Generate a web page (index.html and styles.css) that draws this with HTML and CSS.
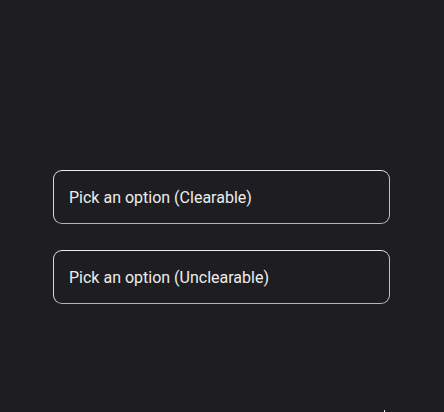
FILE: index.html
```html
<!DOCTYPE html>
<html>
<head>
<meta charset="utf-8">
<link rel="stylesheet" href="styles.css">
</head>
<body>
<div class="page">
  <div class="stack">
    <div class="select"><span class="label">Pick an option (Clearable)</span></div>
    <div class="select"><span class="label">Pick an option (Unclearable)</span></div>
  </div>
  <span class="tick"></span>
</div>
</body>
</html>
```

FILE: styles.css
```css
html, body {
  margin: 0;
  padding: 0;
  background: #1e1e22;
}
.page {
  position: relative;
  width: 444px;
  height: 412px;
  overflow: hidden;
  font-family: Roboto, "Noto Sans", sans-serif;
}
.stack {
  display: flex;
  flex-direction: column;
  gap: 26px;
  padding: 170px 0 0 53px;
}
.select {
  box-sizing: border-box;
  width: 337px;
  height: 54px;
  border: 1px solid #d8d8d8;
  border-top-color: #ececec;
  border-bottom-color: #b4b4b4;
  border-right-color: #c0c0c0;
  border-radius: 9px;
  display: flex;
  align-items: center;
  padding-left: 15px;
}
.label {
  color: #ededed;
  font-size: 16px;
}
.tick {
  position: absolute;
  left: 384px;
  top: 410px;
  width: 1px;
  height: 2px;
  background: #e8e8e8;
}
```
